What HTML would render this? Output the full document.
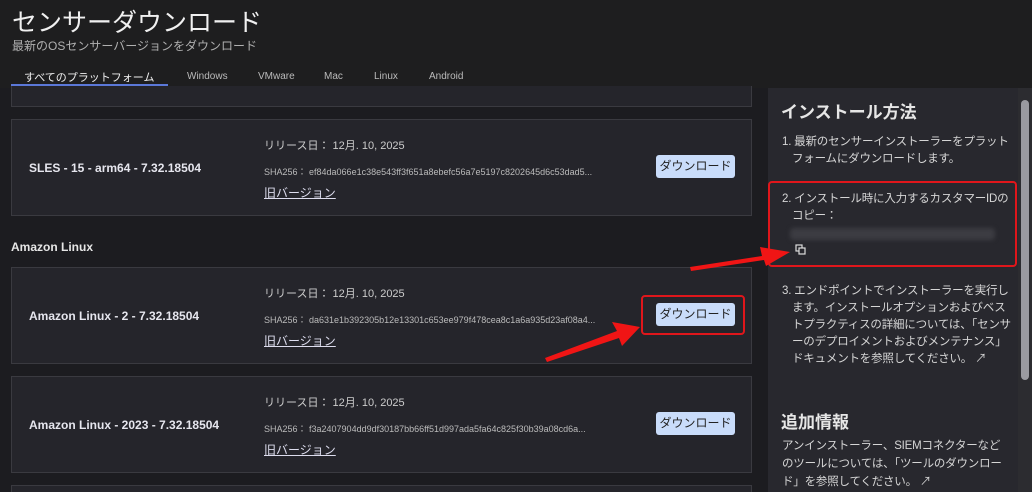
<!DOCTYPE html>
<html><head><meta charset="utf-8"><style>
*{margin:0;padding:0;box-sizing:border-box}
html,body{width:1032px;height:492px;overflow:hidden}
body{background:#1c1c20;font-family:"Liberation Sans","Noto Sans CJK JP",sans-serif;color:#e6e6e6;position:relative}
.hdr{position:absolute;left:0;top:0;width:1032px;height:88px;background:#1e1e1f}
.title{position:absolute;left:12px;top:3px;font-size:25px;color:#f0f0f0}
.sub{position:absolute;left:12px;top:37px;font-size:12px;color:#b0b0b0}
.tab{position:absolute;top:71px;font-size:10px;color:#bbb}
.tab.a{color:#eee;font-size:11px;top:69px}
.ul{position:absolute;left:11px;top:84px;width:157px;height:2px;background:#5b78d8}
.card{position:absolute;left:11px;width:741px;background:#25252b;border:1px solid #3a3a40}
.name{position:absolute;left:17px;font-size:12px;font-weight:bold;color:#e6e6ee}
.rel{position:absolute;left:252px;font-size:11px;color:#ccc}
.sha{position:absolute;left:252px;font-size:9px;color:#bbb;white-space:nowrap}
.old{position:absolute;left:252px;font-size:12px;color:#dde;text-decoration:underline}
.btn{position:absolute;left:644px;width:79px;height:23px;background:#c9dcfa;border-radius:3px;color:#222;font-size:12px;text-align:center;line-height:23px}
.rp{position:absolute;left:768px;top:88px;width:250px;height:404px;background:#28282e}
.rp h2{position:absolute;left:13px;font-size:17px;font-weight:bold;color:#e6e6e6}
.rp p{position:absolute;left:14px;width:230px;font-size:11.5px;line-height:17px;color:#d6d6d6;padding-left:10px;text-indent:-10px;letter-spacing:-0.2px}
.rp p.n{padding-left:0;text-indent:0;width:226px;line-height:18px}
.sb{position:absolute;left:1018px;top:88px;width:14px;height:404px;background:#2c2c30}
</style></head><body>
<div class="hdr">
<div class="title">センサーダウンロード</div>
<div class="sub">最新のOSセンサーバージョンをダウンロード</div>
<div class="tab a" style="left:24px">すべてのプラットフォーム</div>
<div class="tab" style="left:187px">Windows</div>
<div class="tab" style="left:258px">VMware</div>
<div class="tab" style="left:324px">Mac</div>
<div class="tab" style="left:374px">Linux</div>
<div class="tab" style="left:429px">Android</div>
<div class="ul"></div>
</div>
<div class="card" style="top:86px;height:21px;border-top:none"></div>
<div class="card" style="top:119px;height:97px">
<div class="name" style="top:41px">SLES - 15 - arm64 - 7.32.18504</div>
<div class="rel" style="top:17px">リリース日： 12月. 10, 2025</div>
<div class="sha" style="top:45px">SHA256： ef84da066e1c38e543ff3f651a8ebefc56a7e5197c8202645d6c53dad5...</div>
<div class="old" style="top:64px">旧バージョン</div>
<div class="btn" style="top:35px">ダウンロード</div>
</div>
<div style="position:absolute;left:11px;top:240px;font-size:12px;font-weight:bold;color:#e6e6e6">Amazon Linux</div>
<div class="card" style="top:267px;height:97px">
<div class="name" style="top:41px">Amazon Linux - 2 - 7.32.18504</div>
<div class="rel" style="top:17px">リリース日： 12月. 10, 2025</div>
<div class="sha" style="top:45px">SHA256： da631e1b392305b12e13301c653ee979f478cea8c1a6a935d23af08a4...</div>
<div class="old" style="top:64px">旧バージョン</div>
<div class="btn" style="top:35px">ダウンロード</div>
</div>
<div style="position:absolute;left:641px;top:295px;width:104px;height:40px;border:2px solid #e0161b;border-radius:4px"></div>
<div class="card" style="top:376px;height:97px">
<div class="name" style="top:41px">Amazon Linux - 2023 - 7.32.18504</div>
<div class="rel" style="top:17px">リリース日： 12月. 10, 2025</div>
<div class="sha" style="top:45px">SHA256： f3a2407904dd9df30187bb66ff51d997ada5fa64c825f30b39a08cd6a...</div>
<div class="old" style="top:64px">旧バージョン</div>
<div class="btn" style="top:35px">ダウンロード</div>
</div>
<div class="card" style="top:485px;height:10px"></div>
<div class="rp">
<h2 style="top:10px">インストール方法</h2>
<p style="top:46px">1. 最新のセンサーインストーラーをプラットフォームにダウンロードします。</p>
<p style="top:103px">2. インストール時に入力するカスタマーIDのコピー：</p>
<div style="position:absolute;left:22px;top:140px;width:205px;height:12px;background:#3c3c42;border-radius:4px;filter:blur(2px)"></div>
<svg style="position:absolute;left:27px;top:156px" width="12" height="12" viewBox="0 0 12 12" fill="none" stroke="#ddd" stroke-width="1.2"><rect x="1" y="1" width="6" height="6"/><rect x="4" y="4" width="6" height="6" fill="#28282e"/></svg>
<p style="top:195px">3. エンドポイントでインストーラーを実行します。インストールオプションおよびベストプラクティスの詳細については、「センサーのデプロイメントおよびメンテナンス」ドキュメントを参照してください。 ↗</p>
<h2 style="top:320px">追加情報</h2>
<p class="n" style="top:349px">アンインストーラー、SIEMコネクターなどのツールについては、「ツールのダウンロード」を参照してください。 ↗</p>
</div>
<div style="position:absolute;left:768px;top:181px;width:249px;height:86px;border:2px solid #e0161b;border-radius:4px"></div>
<div class="sb"><div style="position:absolute;left:3px;top:12px;width:8px;height:280px;background:#9a9aa0;border-radius:4px"></div></div>
<svg style="position:absolute;left:0;top:0" width="1032" height="492">
<polygon points="545,358 617,331 612,322 640,327 622,346 619,338 547,362" fill="#f01515"/>
<polygon points="690,267 762,256 760,247 790,252 766,266 764,260 691,271" fill="#f01515"/>
</svg>
</body></html>
